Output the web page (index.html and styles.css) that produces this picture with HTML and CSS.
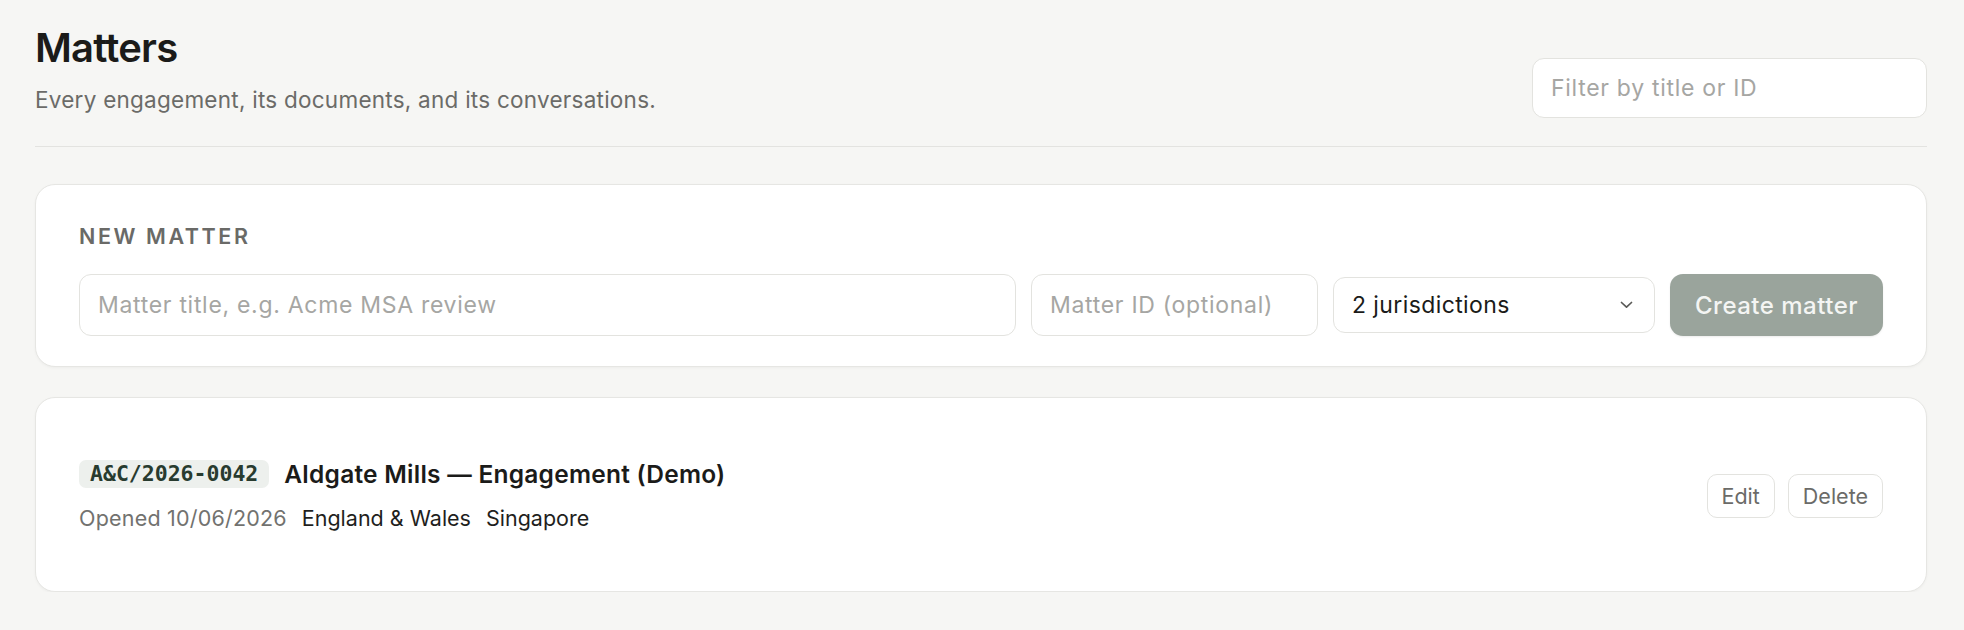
FILE: index.html
```html
<!DOCTYPE html>
<html lang="en">
<head>
<meta charset="utf-8">
<title>Matters</title>
<link rel="stylesheet" href="styles.css">
</head>
<body>
<main class="page">
  <header class="page-header">
    <div class="page-heading">
      <h1 class="page-title">Matters</h1>
      <p class="page-subtitle">Every engagement, its documents, and its conversations.</p>
    </div>
    <input class="field filter-field" type="text" placeholder="Filter by title or ID">
  </header>

  <section class="card new-matter">
    <h2 class="section-label">NEW MATTER</h2>
    <form class="new-matter-form">
      <input class="field title-field" type="text" placeholder="Matter title, e.g. Acme MSA review">
      <input class="field id-field" type="text" placeholder="Matter ID (optional)">
      <button class="select-field" type="button">
        <span>2 jurisdictions</span>
        <svg class="chevron" viewBox="0 0 13 8" width="13" height="8" aria-hidden="true">
          <path d="M1.5 1.5 L6.5 6.2 L11.5 1.5" fill="none" stroke="currentColor" stroke-width="1.7" stroke-linecap="round" stroke-linejoin="round"/>
        </svg>
      </button>
      <button class="primary-btn" type="button" disabled>Create matter</button>
    </form>
  </section>

  <section class="card matter-row">
    <div class="matter-info">
      <div class="matter-head">
        <code class="matter-id">A&amp;C/2026-0042</code>
        <span class="matter-name">Aldgate Mills — Engagement (Demo)</span>
      </div>
      <div class="matter-meta">
        <span class="opened">Opened 10/06/2026</span>
        <span class="jurisdiction">England &amp; Wales</span>
        <span class="jurisdiction">Singapore</span>
      </div>
    </div>
    <div class="matter-actions">
      <button class="ghost-btn" type="button">Edit</button>
      <button class="ghost-btn" type="button">Delete</button>
    </div>
  </section>
</main>
</body>
</html>
```

FILE: styles.css
```css
* {
  box-sizing: border-box;
}

html,
body {
  margin: 0;
  background: #f6f6f4;
}

body {
  font-family: Inter, "Noto Sans", "Liberation Sans", sans-serif;
  color: #1b1b19;
}

.page {
  padding: 24px 37px 0 35px;
}

/* Header: title block on the left, filter on the right */
.page-header {
  display: flex;
  align-items: flex-end;
  justify-content: space-between;
  padding-bottom: 28px;
  border-bottom: 1px solid #e3e3e0;
}

.page-title {
  margin: 0;
  font-size: 40px;
  line-height: 48px;
  font-weight: 600;
  letter-spacing: -0.02em;
  color: #1b1b19;
}

.page-subtitle {
  margin: 13px 0 3px;
  font-size: 22.5px;
  line-height: 30px;
  letter-spacing: 0.25px;
  color: #6b6b68;
}

/* Text fields */
.field {
  font-family: inherit;
  font-size: 23px;
  letter-spacing: 0.7px;
  color: #1b1b19;
  background: #fff;
  border: 1px solid #e3e3df;
  border-radius: 12px;
  padding: 0 18px;
  outline: none;
}

.field::placeholder {
  color: #a6a6a3;
}

.filter-field {
  width: 395px;
  height: 60px;
}

.card {
  background: #fff;
  border: 1px solid #e6e6e3;
  border-radius: 20px;
  box-shadow: 0 1px 3px rgba(0, 0, 0, 0.04);
}

/* New matter form */
.new-matter {
  margin-top: 37px;
  padding: 37px 43px 30px;
}

.section-label {
  margin: 0 0 24px;
  font-size: 21.5px;
  line-height: 28px;
  font-weight: 600;
  letter-spacing: 0.12em;
  color: #6a6a67;
}

.new-matter-form {
  display: flex;
  align-items: center;
  gap: 15px;
}

.title-field {
  flex: 1;
  height: 62px;
}

.id-field {
  width: 287px;
  height: 62px;
}

.select-field {
  width: 322px;
  height: 56px;
  display: flex;
  align-items: center;
  justify-content: space-between;
  padding: 0 21px 0 18px;
  font-family: inherit;
  font-size: 23px;
  letter-spacing: 0.4px;
  color: #1b1b19;
  background: #fff;
  border: 1px solid #e3e3df;
  border-radius: 12px;
}

.chevron {
  color: #5a5a57;
}

.primary-btn {
  width: 213px;
  height: 62px;
  font-family: inherit;
  font-size: 24px;
  font-weight: 500;
  letter-spacing: 0.5px;
  color: #f4f5f3;
  background: #9aa49c;
  border: none;
  border-radius: 13px;
  box-shadow: 0 1px 2px rgba(0, 0, 0, 0.08);
}

/* Matter list row */
.matter-row {
  margin-top: 30px;
  padding: 61px 43px 59px;
  display: flex;
  align-items: center;
  justify-content: space-between;
}

.matter-head {
  display: flex;
  align-items: center;
  gap: 15px;
  height: 30px;
}

.matter-id {
  font-family: "DejaVu Sans Mono", "Liberation Mono", monospace;
  font-size: 21.5px;
  font-weight: 700;
  line-height: 28px;
  padding: 0 11px;
  color: #283b2f;
  background: #edf0ed;
  border-radius: 7px;
}

.matter-name {
  font-size: 24.5px;
  line-height: 30px;
  font-weight: 600;
  letter-spacing: 0.25px;
  color: #1b1b19;
}

.matter-meta {
  display: flex;
  gap: 15px;
  margin-top: 15px;
  font-size: 21.5px;
  line-height: 28px;
}

.opened {
  color: #72726f;
  letter-spacing: 0.2px;
}

.jurisdiction {
  color: #1f1f1d;
}

.matter-actions {
  display: flex;
  gap: 13px;
}

.ghost-btn {
  height: 44px;
  padding: 0 14px;
  font-family: inherit;
  font-size: 21.5px;
  color: #6b6b68;
  background: #fff;
  border: 1px solid #e3e3df;
  border-radius: 10px;
}
```
